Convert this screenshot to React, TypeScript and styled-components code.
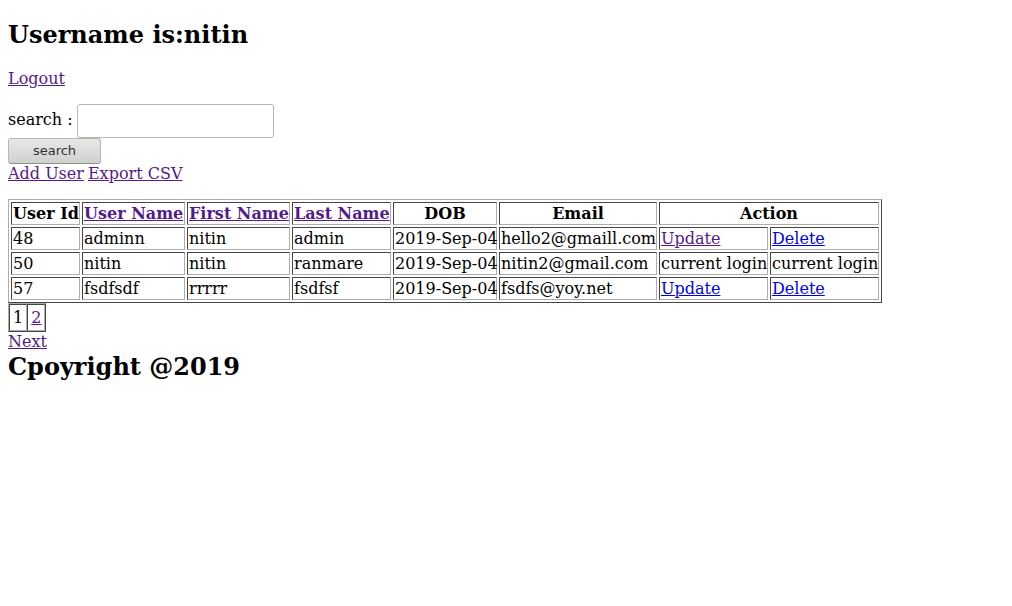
import React from "react";
import styled, { createGlobalStyle } from "styled-components";

const VISITED = "#551a8b";
const UNVISITED = "#0000ee";
const DARK = "#454545";
const LIGHT = "#adadad";

const GlobalStyle = createGlobalStyle`
  body {
    margin: 8px;
    background: #fff;
    color: #000;
    font-family: "DejaVu Serif", serif;
    font-size: 16px;
    line-height: 19px;
  }
`;

const Page = styled.div`
  display: flex;
  flex-direction: column;
  align-items: flex-start;
`;

const Heading = styled.h2`
  margin: 12px 0 20px;
  font-size: 24px;
  line-height: 29px;
`;

const Copyright = styled(Heading)`
  margin: 1px 0 0;
`;

const Link = styled.a<{ $fresh?: boolean }>`
  color: ${(p) => (p.$fresh ? UNVISITED : VISITED)};
  text-decoration: underline;
`;

const SearchForm = styled.form`
  display: flex;
  flex-direction: column;
  align-items: flex-start;
  margin: 16px 0 0;
`;

const Field = styled.div`
  display: flex;
  align-items: center;
  gap: 4px;
`;

const FieldLabel = styled.label`
  padding-bottom: 3px;
`;

const TextInput = styled.input`
  box-sizing: border-box;
  width: 197px;
  height: 34px;
  padding: 0 8px;
  border: 1px solid #b6b6b3;
  border-radius: 3px;
  background: #fff;
  font: 13px "DejaVu Sans", sans-serif;
`;

const SubmitButton = styled.button`
  box-sizing: border-box;
  width: 93px;
  height: 26px;
  padding: 0 0 2px;
  border: 1px solid #b6b6b3;
  border-bottom-color: #91928e;
  border-radius: 3px;
  background: linear-gradient(#e8e8e7, #d0d0ce);
  color: #2e3436;
  font: 13px "DejaVu Sans", sans-serif;
`;

const Links = styled.nav`
  display: flex;
  gap: 4px;
  margin-bottom: 16px;
`;

const BevelTable = styled.table`
  border: 1px solid;
  border-color: ${LIGHT} ${DARK} ${DARK} ${LIGHT};
  border-collapse: separate;

  th,
  td {
    border: 1px solid;
    border-color: ${DARK} ${LIGHT} ${LIGHT} ${DARK};
    white-space: nowrap;
  }
`;

const UserTable = styled(BevelTable)`
  width: 874px;
  table-layout: fixed;
  border-spacing: 2px;

  th,
  td {
    padding: 1px;
  }
`;

const Column = styled.col<{ $width: number }>`
  width: ${(p) => p.$width}px;
`;

const Pages = styled(BevelTable)`
  border-spacing: 0;

  td {
    padding: 3px;
  }
`;

type User = {
  id: number;
  username: string;
  first: string;
  last: string;
  dob: string;
  email: string;
  current?: boolean;
  freshUpdate?: boolean;
};

const users: User[] = [
  { id: 48, username: "adminn", first: "nitin", last: "admin", dob: "2019-Sep-04", email: "hello2@gmaill.com" },
  { id: 50, username: "nitin", first: "nitin", last: "ranmare", dob: "2019-Sep-04", email: "nitin2@gmail.com", current: true },
  { id: 57, username: "fsdfsdf", first: "rrrrr", last: "fsdfsf", dob: "2019-Sep-04", email: "fsdfs@yoy.net", freshUpdate: true },
];

const columnWidths = [69, 103, 103, 99, 104, 158, 109, 109];

const UserRow = ({ user }: { user: User }) => (
  <tr>
    <td>{user.id}</td>
    <td>{user.username}</td>
    <td>{user.first}</td>
    <td>{user.last}</td>
    <td>{user.dob}</td>
    <td>{user.email}</td>
    <td>{user.current ? "current login" : <Link href="#update" $fresh={user.freshUpdate}>Update</Link>}</td>
    <td>{user.current ? "current login" : <Link href="#delete" $fresh>Delete</Link>}</td>
  </tr>
);

export default function App() {
  return (
    <>
      <GlobalStyle />
      <Page>
        <Heading>Username is:nitin</Heading>
        <Link href="#logout">Logout</Link>
        <SearchForm onSubmit={(e) => e.preventDefault()}>
          <Field>
            <FieldLabel htmlFor="search">search :</FieldLabel>
            <TextInput id="search" type="text" name="search" />
          </Field>
          <SubmitButton type="submit">search</SubmitButton>
        </SearchForm>
        <Links>
          <Link href="#add">Add User</Link>
          <Link href="#export">Export CSV</Link>
        </Links>
        <UserTable>
          <colgroup>
            {columnWidths.map((width, i) => (
              <Column key={i} $width={width} />
            ))}
          </colgroup>
          <thead>
            <tr>
              <th>User Id</th>
              <th><Link href="#username">User Name</Link></th>
              <th><Link href="#first">First Name</Link></th>
              <th><Link href="#last">Last Name</Link></th>
              <th>DOB</th>
              <th>Email</th>
              <th colSpan={2}>Action</th>
            </tr>
          </thead>
          <tbody>
            {users.map((user) => (
              <UserRow key={user.id} user={user} />
            ))}
          </tbody>
        </UserTable>
        <Pages>
          <tbody>
            <tr>
              <td>1</td>
              <td><Link href="#page-2">2</Link></td>
            </tr>
          </tbody>
        </Pages>
        <Link href="#next">Next</Link>
        <Copyright>Cpoyright @2019</Copyright>
      </Page>
    </>
  );
}
